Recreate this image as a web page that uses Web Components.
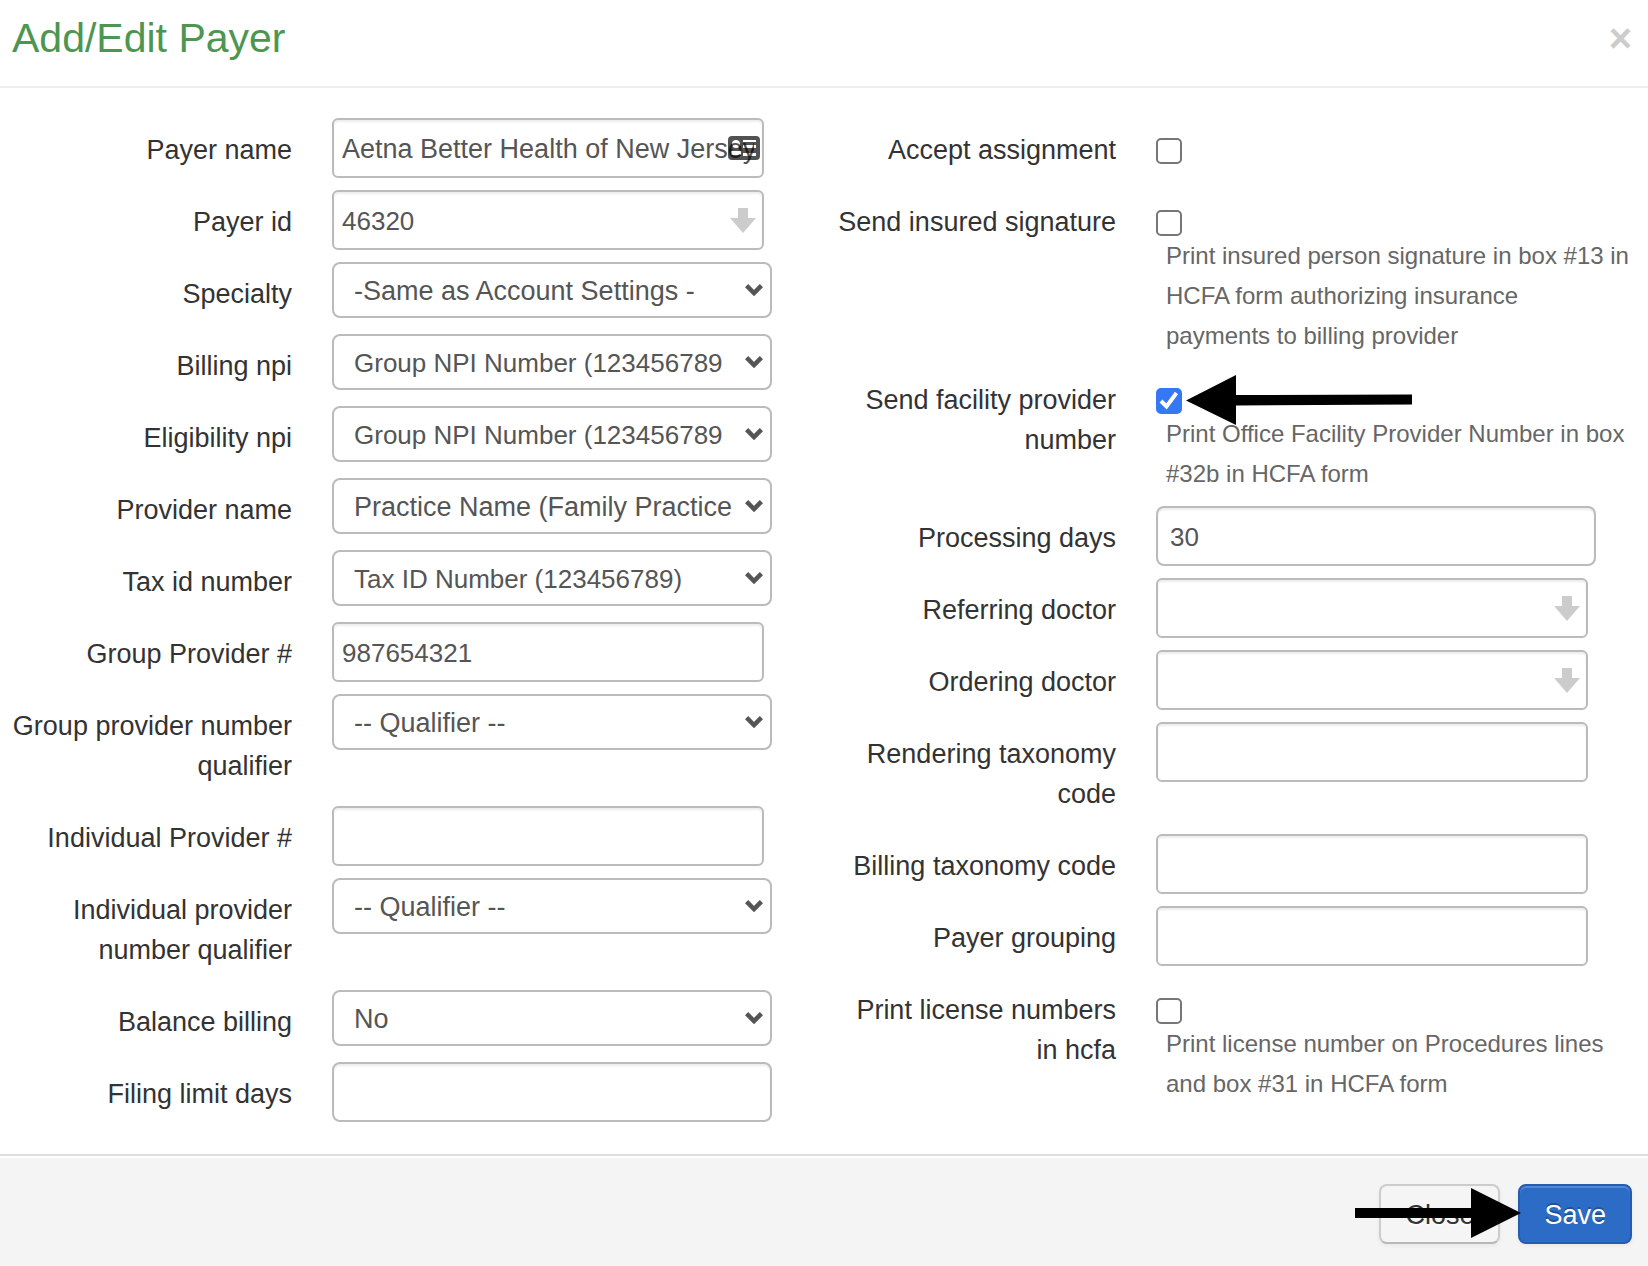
<!DOCTYPE html>
<html lang="en">
<head>
<meta charset="utf-8">
<title>Add/Edit Payer</title>
<style>
  html { background: #fff; }
  body { margin: 0; font-family: "Liberation Sans", Arial, sans-serif; color: #333; }
</style>
</head>
<body>

<payer-dialog heading="Add/Edit Payer">
  <form-column slot="fields">
    <text-field label="Payer name" value="Aetna Better Health of New Jersey" icon="card"></text-field>
    <text-field label="Payer id" value="46320" icon="down" numeric></text-field>
    <select-field label="Specialty" value="-Same as Account Settings -"></select-field>
    <select-field label="Billing npi" value="Group NPI Number (123456789)" numeric></select-field>
    <select-field label="Eligibility npi" value="Group NPI Number (123456789)" numeric></select-field>
    <select-field label="Provider name" value="Practice Name (Family Practice)"></select-field>
    <select-field label="Tax id number" value="Tax ID Number (123456789)" numeric></select-field>
    <text-field label="Group Provider #" value="987654321" numeric></text-field>
    <select-field label="Group provider number qualifier" value="-- Qualifier --"></select-field>
    <text-field label="Individual Provider #"></text-field>
    <select-field label="Individual provider number qualifier" value="-- Qualifier --"></select-field>
    <select-field label="Balance billing" value="No"></select-field>
    <text-field label="Filing limit days" wide></text-field>
  </form-column>
  <form-column slot="fields">
    <check-field label="Accept assignment"></check-field>
    <check-field label="Send insured signature">Print insured person signature in box #13 in<br>HCFA form authorizing insurance<br>payments to billing provider</check-field>
    <check-field label="Send facility provider number" checked>
      <pointer-arrow slot="pointer" direction="left"></pointer-arrow>Print Office Facility Provider Number in box #32b in HCFA form</check-field>
    <text-field label="Processing days" value="30" numeric wide></text-field>
    <text-field label="Referring doctor" icon="down"></text-field>
    <text-field label="Ordering doctor" icon="down"></text-field>
    <text-field label="Rendering taxonomy code"></text-field>
    <text-field label="Billing taxonomy code"></text-field>
    <text-field label="Payer grouping"></text-field>
    <check-field label="Print license numbers in hcfa">Print license number on Procedures lines and box #31 in HCFA form</check-field>
  </form-column>
  <action-button slot="actions">Close</action-button>
  <action-button slot="actions" primary>Save<pointer-arrow slot="pointer" direction="right"></pointer-arrow></action-button>
</payer-dialog>

<script>
const define = (name, render) => customElements.define(name, class extends HTMLElement {
  constructor() {
    super();
    this.attachShadow({ mode: "open" });
  }
  connectedCallback() {
    this.shadowRoot.innerHTML = render(this);
  }
});

const attr = (el, name) => (el.getAttribute(name) || "").replace(/&/g, "&amp;").replace(/"/g, "&quot;");

/* Label on the left, control on the right; shared by every field. */
const rowStyle = `
  * { box-sizing: border-box; }
  :host { display: flex; gap: 40px; min-height: 60px; }
  label { flex: none; width: 280px; padding: 12px 0 8px; font-size: 27px; line-height: 40px; text-align: right; }
  .control { flex: 1; min-width: 0; }
  .box { position: relative; margin-right: 60px; }
  .box.wide { margin-right: 52px; }
  input, select { font-family: inherit; font-size: 27px; color: #555; background: #fff; }
`;

const icons = {
  down: `<svg class="down" width="26" height="25" viewBox="0 0 26 25"><path d="M8 0h10v10h8L13 25 0 10h8z" fill="#ccc"/></svg>`,
  card: `<svg class="card" width="32" height="24" viewBox="0 0 32 24"><path fill="#000" fill-opacity=".68" fill-rule="evenodd" d="M4 0h24a4 4 0 0 1 4 4v16a4 4 0 0 1-4 4H4a4 4 0 0 1-4-4V4a4 4 0 0 1 4-4zM8 4a4 4 0 1 0 0 8a4 4 0 1 0 0-8zM3 19h10v-2q0-4-4-4H7q-4 0-4 4zM15 4v2h13V4zM15 9v3h13V9zM15 17v3h13v-3z"/></svg>`
};

define("text-field", el => `
  <style>${rowStyle}
    input { display: block; width: 100%; height: 60px; margin: 0; padding: 2px 8px 0; border: 2px solid #bbb; border-radius: 6px;
      box-shadow: inset 0 2px 2px rgba(0,0,0,.075); }
    .wide input { padding: 2px 12px 0; border-radius: 8px; }
    input[inputmode] { font-size: 26px; }
    svg { position: absolute; pointer-events: none; }
    .down { right: 8px; top: 18px; }
    .card { right: 4px; top: 18px; }
  </style>
  <label for="field">${attr(el, "label")}</label>
  <div class="control"><div class="box ${el.hasAttribute("wide") ? "wide" : ""}">
    <input id="field" type="text" value="${attr(el, "value")}" ${el.hasAttribute("numeric") ? 'inputmode="numeric"' : ""}>
    ${icons[el.getAttribute("icon")] || ""}
  </div></div>`);

define("select-field", el => `
  <style>${rowStyle}
    select { display: block; appearance: none; width: 100%; height: 56px; margin: 0; padding: 2px 38px 0 20px;
      border: 2px solid #bbb; border-radius: 8px; text-overflow: clip; }
    :host([numeric]) select { font-size: 26px; padding-right: 48px; }
    svg { position: absolute; right: 9px; top: 22px; pointer-events: none; }
  </style>
  <label for="field">${attr(el, "label")}</label>
  <div class="control"><div class="box wide">
    <select id="field"><option selected>${attr(el, "value")}</option></select>
    <svg width="18" height="13" viewBox="0 0 18 13"><path d="M1.600 1.700 9 9l7.400-7.300" fill="none" stroke="#555" stroke-width="4.500"/></svg>
  </div></div>`);

define("check-field", el => `
  <style>${rowStyle}
    .control { padding-top: 20px; }
    .tick { position: relative; display: flex; }
    input { appearance: none; width: 26px; height: 26px; margin: 0; border: 2px solid #767676; border-radius: 5px; }
    input:checked { background: #3478f6; border-color: #3478f6; }
    svg { position: absolute; left: 0; top: 0; display: none; pointer-events: none; }
    input:checked + svg { display: block; }
    ::slotted(pointer-arrow) { position: absolute; left: 30px; top: -13px; }
    .hint { padding: 0 10px; font-size: 24px; line-height: 40px; color: #666; position: relative; }
  </style>
  <label for="field">${attr(el, "label")}</label>
  <div class="control">
    <div class="tick">
      <input id="field" type="checkbox" ${el.hasAttribute("checked") ? "checked" : ""}>
      <svg width="26" height="26" viewBox="0 0 26 26"><path d="M5 13l5.500 5.500L20.500 5" fill="none" stroke="#fff" stroke-width="4"/></svg>
      <slot name="pointer"></slot>
    </div>
    <div class="hint"><slot></slot></div>
  </div>`);

define("form-column", () => `
  <style>
    :host { display: flex; flex-direction: column; gap: 12px; flex: 1 1 0; min-width: 0; padding-left: 12px; }
  </style>
  <slot></slot>`);

define("pointer-arrow", el => {
  const left = el.getAttribute("direction") === "left";
  return `
  <style>:host { display: block; pointer-events: none; } svg { display: block; }</style>
  ${left
    ? `<svg width="226" height="50" viewBox="0 0 226 50"><path d="M0 25.500 50 0v20l176-.5v10L50 30.500v19.500z"/></svg>`
    : `<svg width="166" height="50" viewBox="0 0 166 50"><path d="M166 25 116 0v20H0v10h116v20z"/></svg>`}`;
});

define("action-button", el => `
  <style>
    :host { display: block; position: relative; }
    button { display: block; box-sizing: border-box; height: 60px; margin: 0; padding: 2px 24px 0; border: 2px solid; border-radius: 8px;
      font-family: inherit; font-size: 27px; line-height: 40px; }
    .plain { color: #333; background: #f5f5f5; border-color: #ccc #ccc #b8b8b8; text-shadow: 0 2px 2px rgba(255,255,255,.75);
      box-shadow: 0 2px 4px rgba(0,0,0,.05); }
    .primary { color: #fff; background: #2c6bc6; border-color: #245cb0; text-shadow: 0 -2px 0 rgba(0,0,0,.25);
      box-shadow: inset 0 2px 0 rgba(255,255,255,.2), 0 2px 4px rgba(0,0,0,.05); }
    ::slotted(pointer-arrow) { position: absolute; right: calc(100% - 3px); top: 4px; }
  </style>
  <button type="button" class="${el.hasAttribute("primary") ? "primary" : "plain"}"><slot></slot></button>
  <slot name="pointer"></slot>`);

define("payer-dialog", el => `
  <style>
    :host { display: flex; flex-direction: column; min-height: 100vh; }
    header { display: flex; justify-content: space-between; align-items: center; padding: 0 16px 10px 12px; border-bottom: 2px solid #eee; }
    h3 { margin: 0; font-size: 41px; font-weight: 400; line-height: 76px; color: #4d9650; }
    .dismiss { margin: 0; padding: 0; border: 0; background: none; font: bold 40px/40px "Liberation Sans", Arial, sans-serif; color: #ccc; }
    form { display: flex; padding: 30px 0 32px; }
    footer { flex: 1; display: flex; justify-content: flex-end; align-items: flex-start; gap: 18px; padding: 28px 16px 22px;
      background: #f4f4f4; border-top: 2px solid #ddd; box-shadow: inset 0 2px 0 #fff; }
  </style>
  <header><h3>${attr(el, "heading")}</h3><button class="dismiss" type="button" aria-label="Dismiss">×</button></header>
  <form><slot name="fields"></slot></form>
  <footer><slot name="actions"></slot></footer>`);
</script>
</body>
</html>
